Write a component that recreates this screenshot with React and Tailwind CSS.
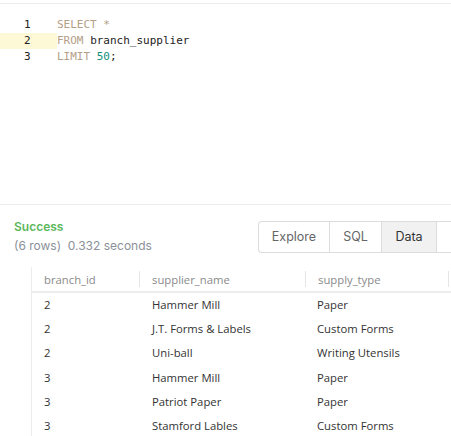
import React from 'react';

const rows = [
  ['2', 'Hammer Mill', 'Paper'],
  ['2', 'J.T. Forms & Labels', 'Custom Forms'],
  ['2', 'Uni-ball', 'Writing Utensils'],
  ['3', 'Hammer Mill', 'Paper'],
  ['3', 'Patriot Paper', 'Paper'],
  ['3', 'Stamford Lables', 'Custom Forms'],
];

export default function App() {
  return (
    <div className="w-[451px] h-[436px] overflow-hidden bg-white relative">
      {/* editor */}
      <div className="h-[202px] border-t border-b border-[#ececec] mt-[3px] pt-[13px] font-['DejaVu_Sans_Mono',monospace] text-[11px]">
        {[
          [<><span className="text-[#b39e86]">SELECT *</span></>, false],
          [<><span className="text-[#b39e86]">FROM </span><span className="text-[#222]">branch_supplier</span></>, true],
          [<><span className="text-[#b39e86]">LIMIT </span><span className="text-[#0f8c7e]">50</span><span className="text-[#222]">;</span></>, false],
        ].map(([code, hl], i) => (
          <div key={i} className="flex h-[16px] items-center">
            <div className={`w-[57px] h-full flex items-center pl-[24px] text-[#222] ${hl ? 'bg-[#fdf8d5]' : ''}`}>{i + 1}</div>
            <div className="whitespace-pre">{code}</div>
          </div>
        ))}
      </div>

      {/* status bar */}
      <div className="flex justify-between pl-[14px] pt-[13px] font-['Inter',sans-serif]">
        <div>
          <div className="text-[12px] font-semibold text-[#5cb85c] leading-[18px]">Success</div>
          <div className="text-[12px] text-[#8b9099] leading-[18px] mt-[1px]">(6 rows)&nbsp; 0.332 seconds</div>
        </div>
        <div className="flex h-[32px] mt-[3px] border border-[#dcdcdc] border-r-0 rounded-l-[4px] text-[12.5px] text-[#666]">
          <div className="w-[71px] flex items-center justify-center border-r border-[#dcdcdc]">Explore</div>
          <div className="w-[52px] flex items-center justify-center border-r border-[#dcdcdc]">SQL</div>
          <div className="w-[55px] flex items-center justify-center border-r border-[#dcdcdc] bg-[#f1f1f1] text-[#333]">Data</div>
          <div className="w-[14px]"></div>
        </div>
      </div>

      {/* table */}
      <div className="mt-[12px] ml-[31px] border-l border-[#ececec] font-['Open_Sans',sans-serif] text-[11.3px] h-[200px]">
        <div className="flex h-[26px] items-center border-b-2 border-[#ececec] text-[#8a8a8a]">
          <div className="w-[107px] pl-[12px] pt-[2px]">branch_id</div>
          <div className="w-[166px] pl-[12px] pt-[2px] border-l border-[#e5e5e5] h-[16px] flex items-center">supplier_name</div>
          <div className="w-[143px] pl-[12px] pt-[2px] border-l border-[#e5e5e5] h-[16px] flex items-center">supply_type</div>
          <div className="border-l border-[#e5e5e5] h-[16px]"></div>
        </div>
        {rows.map((r, i) => (
          <div key={i} className="flex h-[24.3px] items-center text-[#333]">
            <div className="w-[107px] pl-[12px]">{r[0]}</div>
            <div className="w-[166px] pl-[13px]">{r[1]}</div>
            <div className="w-[143px] pl-[12px]">{r[2]}</div>
          </div>
        ))}
      </div>
    </div>
  );
}
